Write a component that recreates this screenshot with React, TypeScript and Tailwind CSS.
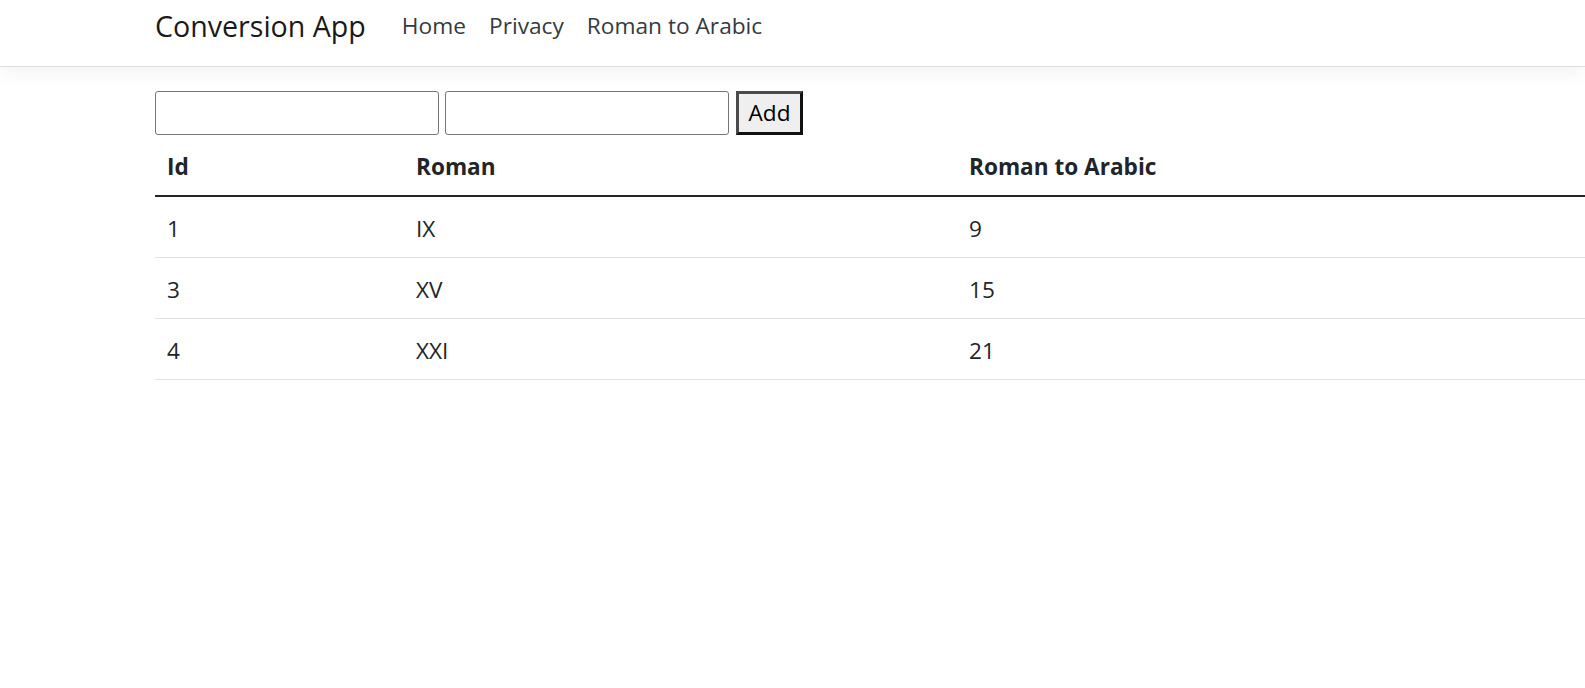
import React from 'react'

const rows = [
  { id: 1, roman: 'IX', arabic: 9 },
  { id: 3, roman: 'XV', arabic: 15 },
  { id: 4, roman: 'XXI', arabic: 21 },
]

export default function App() {
  return (
    <div className="min-h-[688px] bg-white text-[#212529] font-['Segoe_UI','Open_Sans',sans-serif]">
      <nav className="h-[67px] bg-white border-b border-[#dedede] shadow-[0_6px_18px_rgba(0,0,0,0.05)]">
        <div className="flex items-start pl-[155px] pt-[8px]">
          <a className="text-[28.6px] leading-[36px] text-[#1a1a1a]">Conversion App</a>
          <div className="flex items-start ml-[36px] gap-[23px] text-[22.7px] leading-[36px] text-[#343a40]">
            <a>Home</a>
            <a>Privacy</a>
            <a>Roman to Arabic</a>
          </div>
        </div>
      </nav>

      <main className="pl-[155px] pt-[24px]">
        <form className="flex items-center h-[44px]" onSubmit={e => e.preventDefault()}>
          <input className="w-[284px] h-[44px] border border-[#767676] rounded-[3px] px-2 text-[20px] bg-white" />
          <input className="ml-[6px] w-[284px] h-[44px] border border-[#767676] rounded-[3px] px-2 text-[20px] bg-white" />
          <button className="ml-[7px] w-[67px] h-[44px] bg-[#efefef] border-[3px] border-solid border-[#4b4b4b] border-r-[#111] border-b-[#111] text-[22.6px] leading-none text-black">
            Add
          </button>
        </form>

        <table className="w-[1430px] table-fixed border-collapse text-[22.6px]">
          <colgroup>
            <col className="w-[249px]" />
            <col className="w-[553px]" />
            <col />
          </colgroup>
          <thead>
            <tr className="border-b-2 border-[#212529]">
              <th className="text-left font-bold px-[12px] pt-[14px] pb-[10px] leading-[36px]">Id</th>
              <th className="text-left font-bold px-[12px] pt-[14px] pb-[10px] leading-[36px]">Roman</th>
              <th className="text-left font-bold px-[12px] pt-[14px] pb-[10px] leading-[36px]">Roman to Arabic</th>
            </tr>
          </thead>
          <tbody>
            {rows.map(r => (
              <tr key={r.id} className="border-b border-[#dee2e6]">
                <td className="px-[12px] pt-[14px] pb-[10px] leading-[36px]">{r.id}</td>
                <td className="px-[12px] pt-[14px] pb-[10px] leading-[36px]">{r.roman}</td>
                <td className="px-[12px] pt-[14px] pb-[10px] leading-[36px]">{r.arabic}</td>
              </tr>
            ))}
          </tbody>
        </table>
      </main>
    </div>
  )
}
